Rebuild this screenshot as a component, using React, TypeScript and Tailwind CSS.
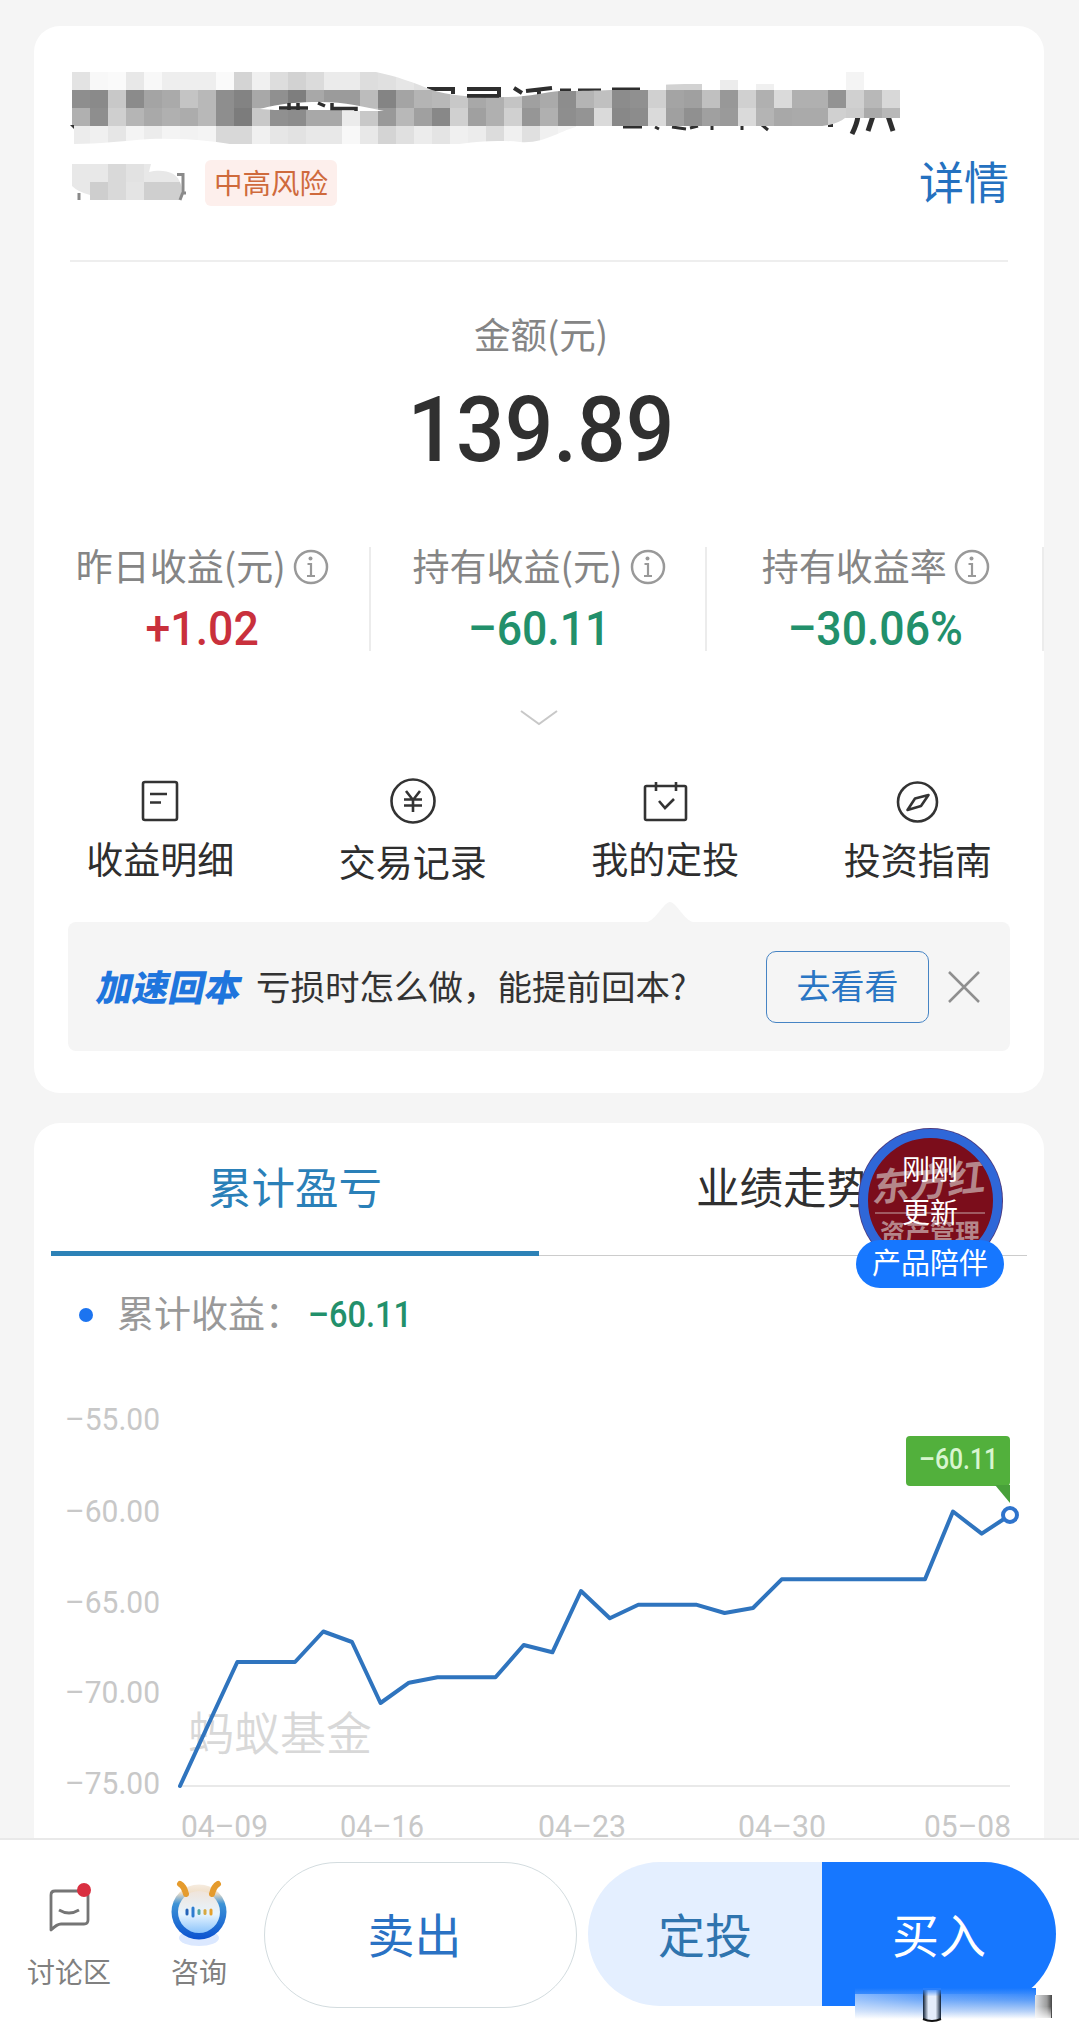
import React from "react";

const stats = [
  { label: "昨日收益(元)", value: "+1.02", color: "text-[#c9303c]" },
  { label: "持有收益(元)", value: "–60.11", color: "text-[#22906b]" },
  { label: "持有收益率", value: "–30.06%", color: "text-[#22906b]" },
];

// grey levels of the blurred fund name, 18px cells, 46 per row
const mosaic = [
  "e3 f8 fa e8 f8 ee ee ee fa d4 f0 dd d2 db eb eb dd e0 e6 e0 .. .. .. .. .. .. .. .. .. .. .. .. .. d2 d2 .. ec .. f0 .. .. .. .. f4 .. ..",
  "8e 8a c8 8b a4 aa c4 b8 8e 83 a8 90 7e a8 9b 9b bc 84 a4 b4 b8 c8 a8 b0 c4 a0 aa 8d b4 c0 8c 90 d0 a4 a0 c0 98 d0 b0 da b0 b0 93 d0 b8 d8",
  "b0 8e cf b5 a9 b0 ac b8 8e 7c c8 90 8c a8 a8 eb c8 99 b8 a0 88 d0 a0 b0 d0 96 b0 8e 94 da 88 8c da a0 90 a0 9a da b4 a8 aa aa d0 cc aa b8",
  "ec f0 e6 f4 ec f4 f2 f4 d8 d8 f0 e6 e2 e8 e8 f8 e8 d4 e0 ec e4 f0 ec dc f0 e0 f0 f4 .. .. .. .. .. .. .. .. .. .. .. .. .. .. .. .. .. ..",
].map((row) => row.split(" "));

const points = [
  [180, 1786], [209, 1723], [237.3, 1662], [295, 1662], [323.3, 1631.5],
  [352, 1642], [380.5, 1703], [409, 1682.7], [437.5, 1677.3], [495.5, 1677.3],
  [523.7, 1645], [552.4, 1652.3], [581, 1591], [609.8, 1618.3], [638.3, 1604.7],
  [696, 1604.7], [724.6, 1613], [753, 1608], [781.7, 1579.3], [925, 1579.3],
  [953, 1511.5], [981.7, 1533.7], [1010, 1515],
];

const yLabels = [
  { text: "–55.00", y: 1430 },
  { text: "–60.00", y: 1521.5 },
  { text: "–65.00", y: 1612.5 },
  { text: "–70.00", y: 1702.5 },
  { text: "–75.00", y: 1794 },
];

const xLabels = [
  { text: "04–09", x: 181, w: 87 },
  { text: "04–16", x: 340, w: 84 },
  { text: "04–23", x: 538, w: 88 },
  { text: "04–30", x: 738, w: 88 },
  { text: "05–08", x: 924, w: 87 },
];

function MaskedName() {
  return (
    <svg viewBox="34 26 1010 124" className="block h-[124px] w-full">
      <defs>
        <clipPath id="brush">
          <path d="M72 72H376C396 76 415 83 432 90C450 96 480 98 505 97C530 97 545 92 560 91C590 91 625 90 640 88C655 84 680 84 702 84V90H720V80H738V90H756V84H774V90H846V72H864V90H900V118H845C835 126 815 128 800 126H580C560 130 545 144 520 142C480 138 460 146 430 146H240C220 142 190 138 150 139C120 141 100 144 74 144V126H72Z" />
        </clipPath>
      </defs>
      {/* strokes of the name that stick out above and below the mask */}
      <g fill="none" stroke="#2e2e2e">
        <path d="M427 89H453V94M467 89H499V96H467M514 88L522 93M526 91L552 88M539 89V95" strokeWidth="4" />
        <path d="M560 90.500H571M578 90.500H601M612 89.500H640" strokeWidth="4" />
        <path d="M623 127H642M655 127L659 129M672 127L686 129M690 128L698 126M712 124V130M742 124V130M762 125L768 130" strokeWidth="3" />
        <path d="M828 125H833" strokeWidth="4" />
        <path d="M858 116Q857 124 852 134M873 116L868 131M888 116L893 131" strokeWidth="5" />
      </g>
      <g clipPath="url(#brush)" shapeRendering="crispEdges">
        {mosaic.map((row, r) =>
          row.map((c, i) =>
            c === ".." ? null : (
              <rect key={`${r}-${i}`} x={72 + i * 18} y={72 + r * 18} width="18" height="18" fill={`#${c}${c}${c}`} />
            ),
          ),
        )}
      </g>
      <path d="M467 96.500H499" stroke="#2e2e2e" strokeWidth="2.500" />
      <path d="M260 109C280 103 300 102 320 102C345 102 365 107 384 111H342V110H275Z" fill="#fff" />
      <path d="M279 108H308M289 103V110M298 103V110M318 103L325 106M332 103V108.500H356V111" fill="none" stroke="#2e2e2e" strokeWidth="3.500" />
      <path d="M70 125H74V129Z" fill="#333" />
    </svg>
  );
}

function MaskedCode() {
  return (
    <svg viewBox="72 162 118 38" className="h-[38px] w-[118px]">
      <clipPath id="code">
        <path d="M72 162H151L149 170C160 167 178 168 181 183C182 190 181 194 179 198H90V193Q78 190 72 184Z" />
      </clipPath>
      <g clipPath="url(#code)">
        <path d="M72 162H190V198H72Z" fill="#e8e8e8" />
        <path d="M108 162H126V180H108Z" fill="#d9d9d9" />
        <path d="M126 162H144V180H126Z" fill="#e2e2e2" />
        <path d="M90 180H108V198H90Z" fill="#cecece" />
        <path d="M108 180H126V198H108Z" fill="#d9d9d9" />
        <path d="M126 180H144V198H126Z" fill="#e4e4e4" />
        <path d="M144 180H190V198H144Z" fill="#cfcfcf" />
      </g>
      <path d="M79 191V198M177 172.500H183V190L180 198M183 191H186" fill="none" stroke="#8a8a8a" strokeWidth="3" />
    </svg>
  );
}

function InfoIcon() {
  return (
    <svg viewBox="0 0 36 36" className="h-9 w-9" fill="none" stroke="#999">
      <circle cx="18" cy="18" r="16" strokeWidth="2.500" />
      <circle cx="17.500" cy="9.500" r="2" fill="#999" stroke="none" />
      <path d="M14.500 15H18V26.500M14 27H22" strokeWidth="2.200" />
    </svg>
  );
}

const shortcuts = [
  {
    label: "收益明细",
    offset: "pt-0",
    icon: (
      <>
        <rect x="7" y="5" width="34" height="38" rx="2" />
        <path d="M14 17H31M14 25.500H25" />
      </>
    ),
  },
  {
    label: "交易记录",
    offset: "pt-[3px]",
    icon: (
      <>
        <circle cx="24" cy="24" r="21.500" />
        <path d="M17 14L24 23L31 14M24 23V35M15 22.500H33M15 28.500H33" />
      </>
    ),
  },
  {
    label: "我的定投",
    offset: "pt-0",
    icon: (
      <>
        <rect x="4" y="9" width="41" height="34" rx="1.500" />
        <path d="M15 5V14M35 5V14M18 24L24 31L33 22" />
      </>
    ),
  },
  {
    label: "投资指南",
    offset: "pt-px",
    icon: (
      <>
        <circle cx="23.500" cy="25" r="19.500" />
        <path d="M34.500 18L27 29L13.500 33L21 21.500Z" strokeLinejoin="round" />
      </>
    ),
  },
];

function SummaryCard() {
  return (
    <section className="flex h-[1067px] shrink-0 flex-col rounded-[26px] bg-white">
      <MaskedName />
      <div className="flex h-[66px] items-center pr-[35px] pl-[38px]">
        <MaskedCode />
        <span className="ml-[15px] flex h-[46px] w-[132px] items-center justify-center rounded-md bg-[#fdefec] pb-0.5 text-[28.500px] text-[#cf6a3c]">
          中高风险
        </span>
        <a href="#" className="ml-auto pb-[5px] text-[45px] leading-none text-[#2471c0]">
          详情
        </a>
      </div>
      <div className="mx-9 mt-11 h-0.5 bg-[#eee]" />
      <div className="mt-12 h-12 pl-1 text-center text-[36.500px] leading-[48px] text-[#858585]">金额(元)</div>
      <div className="mt-[17px] h-[110px] scale-x-[0.94] pl-1 text-center font-['Roboto'] text-[91px] leading-[110px] font-medium text-[#303030]">
        139.89
      </div>
      <div className="mt-[62px] grid h-[104px] grid-cols-3 grid-rows-1">
        {stats.map((s) => (
          <div key={s.label} className="flex h-[104px] flex-col items-center border-r-2 border-[#ececec] pl-0.5">
            <div className="flex h-[40px] items-center gap-[7px] text-[37px] leading-[36px] text-[#858585]">
              <span className="pb-[3px]">{s.label}</span>
              <InfoIcon />
            </div>
            <div className={`mt-[14px] scale-x-[0.91] font-['Roboto'] text-[49px] leading-[58px] font-medium ${s.color}`}>
              {s.value}
            </div>
          </div>
        ))}
      </div>
      <svg viewBox="0 0 40 18" className="mx-auto mt-[58px] h-[18px] w-10 shrink-0" fill="none" stroke="#c8c8c8" strokeWidth="2">
        <path d="M2 2L20 15L38 2" />
      </svg>
      <div className="mt-[50px] grid h-[125px] grid-cols-4">
        {shortcuts.map((s) => (
          <div key={s.label} className="flex flex-col items-center">
            <svg viewBox="0 0 48 48" className="h-12 w-12" fill="none" stroke="#333" strokeWidth="2.600">
              {s.icon}
            </svg>
            <div className={`mt-[7px] text-[37px] leading-[52px] text-[#2e2e2e] ${s.offset}`}>{s.label}</div>
          </div>
        ))}
      </div>
      <svg viewBox="0 0 46 20" className="ml-[613px] h-5 w-[46px] shrink-0">
        <path d="M0 20C9 18 17 0 23 0C29 0 37 18 46 20Z" fill="#f5f5f5" />
      </svg>
      <div className="mx-[34px] flex h-[129px] shrink-0 items-center rounded-lg bg-[#f5f5f5] pr-[30px] pl-[30px]">
        <span className="w-[146px] -skew-x-12 pb-[3px] text-[36px] leading-none font-black text-[#1f75dd]">加速回本</span>
        <span className="ml-3 pb-[3px] text-[34.500px] leading-none whitespace-nowrap text-[#333]">
          亏损时怎么做，能提前回本?
        </span>
        <button className="ml-auto flex h-[72px] w-[163px] items-center justify-center rounded-[10px] border-[1.500px] border-[#4684c4] pb-1 text-[34px] text-[#2a76c4]">
          去看看
        </button>
        <svg viewBox="0 0 32 32" className="ml-[19px] h-8 w-8" stroke="#8f8f8f" strokeWidth="2.500">
          <path d="M1 1L31 31M31 1L1 31" />
        </svg>
      </div>
    </section>
  );
}

function CompanionBadge() {
  return (
    <div className="absolute top-[6px] left-[822px] flex w-[148px] flex-col items-center">
      <div className="relative flex h-[143px] w-[143px] flex-col items-center overflow-hidden rounded-full border-[9px] border-[#2f67d8] bg-[#7b0d1b] shadow-[0_0_0_1px_#4a3a80]">
        <div className="absolute top-[18px] -skew-x-12 -rotate-6 text-[38px] leading-[48px] font-bold whitespace-nowrap text-[#b5868a]">
          东方红
        </div>
        <div className="absolute top-[74px] h-0.5 w-[110px] bg-[#a05a62]" />
        <div className="absolute top-[79px] text-[25px] leading-7 font-bold whitespace-nowrap text-[#b5868a]">资产管理</div>
        <div className="relative mt-[9px] text-center text-[28px] leading-[43px] text-white">
          刚刚
          <br />
          更新
        </div>
      </div>
      <div className="relative -mt-8 flex h-12 w-[148px] items-center justify-center rounded-full bg-[#1677ff] pb-1 text-[29px] text-white">
        产品陪伴
      </div>
    </div>
  );
}

function ProfitChart() {
  return (
    <svg viewBox="34 1360 1010 478" className="block h-[478px] w-full font-['Roboto']">
      <text x="188" y="1750" fontSize="46" fontWeight="350" fill="#d8d8d8" className="font-['Noto_Sans_CJK_SC']">
        蚂蚁基金
      </text>
      {yLabels.map((l) => (
        <text key={l.text} x="65" y={l.y} fontSize="31.500" fill="#c8c8c8" textLength="95" lengthAdjust="spacingAndGlyphs">
          {l.text}
        </text>
      ))}
      {xLabels.map((l) => (
        <text key={l.text} x={l.x} y="1837" fontSize="31.500" fill="#c8c8c8" textLength={l.w} lengthAdjust="spacingAndGlyphs">
          {l.text}
        </text>
      ))}
      <path d="M180 1786H1010" stroke="#e9e9e9" strokeWidth="2" />
      <polyline points={points.map((p) => p.join(",")).join(" ")} fill="none" stroke="#2f74be" strokeWidth="4" strokeLinejoin="round" strokeLinecap="round" />
      <circle cx="1010" cy="1515" r="7" fill="#fff" stroke="#2f74cc" strokeWidth="4" />
      <rect x="906" y="1436" width="104" height="50" rx="4" fill="#52b03c" />
      <path d="M995 1485H1010V1503Z" fill="#48a03a" />
      <text x="919" y="1469" fontSize="29" fontWeight="500" fill="#d8f5cf" textLength="79" lengthAdjust="spacingAndGlyphs">
        –60.11
      </text>
    </svg>
  );
}

function TrendCard() {
  return (
    <section className="relative mt-[30px] flex h-[715px] shrink-0 flex-col rounded-t-[26px] bg-white">
      <div className="mx-[17px] grid h-[133px] grid-cols-2 text-[43.500px]">
        <div className="flex items-center justify-center border-b-[5px] border-[#2d82b7] pb-0.5 text-[#2a80b8]">累计盈亏</div>
        <div className="flex items-center justify-center border-b border-[#ccc] pb-1.5 text-[#303030]">业绩走势</div>
      </div>
      <CompanionBadge />
      <div className="flex h-[104px] items-center pt-[13px] pl-[45px]">
        <span className="h-3.5 w-3.5 rounded-full bg-[#1c74f0]" />
        <span className="ml-6 w-[191px] pb-1 text-[37px] leading-none text-[#999]">累计收益：</span>
        <span className="origin-left scale-x-[0.88] font-['Roboto'] text-[37px] leading-none font-medium text-[#22906b]">–60.11</span>
      </div>
      <ProfitChart />
    </section>
  );
}

function DiscussIcon() {
  return (
    <svg viewBox="0 0 48 56" className="h-14 w-12" fill="none">
      <path d="M5 49V14Q5 10 9 10H38Q42 10 42 14V39Q42 43 38 43H15Q11 43 5 49Z" stroke="#757575" strokeWidth="2.800" strokeLinejoin="round" />
      <path d="M13 29Q23 35 33 29" stroke="#757575" strokeWidth="2.800" />
      <circle cx="38" cy="9" r="7" fill="#d92f40" />
    </svg>
  );
}

function AntIcon() {
  return (
    <svg viewBox="0 0 60 68" className="h-[68px] w-[60px]">
      <defs>
        <linearGradient id="ring" x1="0" y1="0" x2="0" y2="1">
          <stop offset="0" stopColor="#f6ece0" />
          <stop offset="0.150" stopColor="#f0dfc8" />
          <stop offset="0.350" stopColor="#3d93d6" />
          <stop offset="1" stopColor="#0b52d0" />
        </linearGradient>
        <linearGradient id="face" x1="0" y1="0" x2="0" y2="1">
          <stop offset="0" stopColor="#f0e4da" />
          <stop offset="0.550" stopColor="#e6f4ff" />
          <stop offset="1" stopColor="#8cc4fb" />
        </linearGradient>
      </defs>
      <ellipse cx="30" cy="58" rx="20" ry="8" fill="#dbe8ff" />
      <circle cx="30" cy="32" r="27.500" fill="url(#ring)" />
      <circle cx="30" cy="32" r="21" fill="url(#face)" />
      <path d="M11 4Q15 6 17 14M49 4Q45 6 43 14" fill="none" stroke="#e59b2d" strokeWidth="6" strokeLinecap="round" />
      <g strokeWidth="3" strokeLinecap="round">
        <path d="M18 30V34" stroke="#2463b8" />
        <path d="M24 28V36" stroke="#2d7cd0" />
        <path d="M30 30.500V33.500" stroke="#53a7a5" />
        <path d="M36 30.500V33.500" stroke="#d6a843" />
        <path d="M42 30V34" stroke="#e5a02c" />
      </g>
    </svg>
  );
}

// smeared watermark over the corner of the buy button
function Smear() {
  return (
    <svg viewBox="0 0 200 38" className="absolute top-[146px] left-[854px] h-[38px] w-[200px]">
      <defs>
        <linearGradient id="smearFade" x1="0" y1="0" x2="0" y2="1">
          <stop offset="0" stopColor="#1677ff" />
          <stop offset="0.400" stopColor="#5f9ff8" />
          <stop offset="0.750" stopColor="#b4d0f8" />
          <stop offset="1" stopColor="#fff" />
        </linearGradient>
        <linearGradient id="smearLeft">
          <stop offset="0" stopColor="#fff" stopOpacity="0.400" />
          <stop offset="0.350" stopColor="#fff" stopOpacity="0.150" />
          <stop offset="1" stopColor="#fff" stopOpacity="0" />
        </linearGradient>
        <linearGradient id="smearGray">
          <stop offset="0" stopColor="#dfe2e6" />
          <stop offset="0.700" stopColor="#9b9b9b" />
          <stop offset="1" stopColor="#444" />
        </linearGradient>
        <linearGradient id="smearDark">
          <stop offset="0" stopColor="#0c1d33" />
          <stop offset="0.300" stopColor="#e4edfb" />
          <stop offset="0.700" stopColor="#e4edfb" />
          <stop offset="1" stopColor="#0c1d33" />
        </linearGradient>
        <linearGradient id="smearTop" x1="0" y1="0" x2="0" y2="1">
          <stop offset="0" stopColor="#2a80fb" />
          <stop offset="0.350" stopColor="#2a80fb" stopOpacity="0" />
        </linearGradient>
        <linearGradient id="smearBottom" x1="0" y1="0" x2="0" y2="1">
          <stop offset="0.500" stopColor="#fff" stopOpacity="0" />
          <stop offset="1" stopColor="#fff" stopOpacity="0.800" />
        </linearGradient>
      </defs>
      <rect x="1" y="2" width="181" height="31" fill="url(#smearFade)" />
      <rect x="1" y="8" width="181" height="25" fill="url(#smearLeft)" />
      <rect x="181" y="9" width="17" height="23" fill="url(#smearGray)" />
      <rect x="181" y="9" width="16" height="23" fill="url(#smearBottom)" />
      <path d="M69 4H87V33Q78 37 69 33Z" fill="url(#smearDark)" />
      <rect x="69" y="2" width="18" height="24" fill="url(#smearTop)" />
      <path d="M69 33Q78 37 87 33" fill="none" stroke="#111" strokeWidth="2" />
    </svg>
  );
}

function ActionBar() {
  return (
    <footer className="relative flex h-[205px] shrink-0 items-start border-t-2 border-[#e9e9e9] bg-white pt-[22px] pl-[22px]">
      <div className="flex w-[96px] flex-col items-center pt-[19px]">
        <DiscussIcon />
        <span className="mt-3.5 pr-0.5 text-[28px] leading-10 text-[#808080]">讨论区</span>
      </div>
      <div className="ml-[33px] flex w-24 flex-col items-center pt-[18px]">
        <AntIcon />
        <span className="mt-[3px] text-[28px] leading-10 text-[#808080]">咨询</span>
      </div>
      <button className="ml-[17px] flex h-[146px] w-[313px] items-center justify-center rounded-full border-[1.500px] border-[#d3dcdf] pr-3 pb-1 text-[47px] text-[#2a72c4]">
        卖出
      </button>
      <div className="ml-[11px] flex h-[144px] w-[468px] overflow-hidden rounded-full text-[47px]">
        <button className="w-1/2 bg-[#e4efff] pb-0.5 text-[#2f74ae]">定投</button>
        <button className="w-1/2 bg-[#1677ff] pb-0.5 text-white">买入</button>
      </div>
      <Smear />
    </footer>
  );
}

export default function App() {
  return (
    <div className="flex h-[2043px] w-[1079px] flex-col overflow-hidden bg-[#f5f5f5] font-['Noto_Sans_CJK_SC',sans-serif]">
      <main className="flex h-[1838px] shrink-0 flex-col pt-[26px] pr-[35px] pl-[34px]">
        <SummaryCard />
        <TrendCard />
      </main>
      <ActionBar />
    </div>
  );
}
